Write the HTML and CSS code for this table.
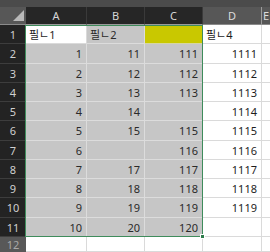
FILE: index.html
```html
<!DOCTYPE html>
<html lang="ko">
<head>
  <meta charset="UTF-8" />
  <title>Sheet</title>
  <link rel="stylesheet" href="styles.css">
</head>
<body>
  <div class="sheet">
    <div class="strip"></div>

    <!-- column headers -->
    <div class="corner"><span class="tri"></span></div>
    <div class="colhead sel">A</div>
    <div class="colhead sel">B</div>
    <div class="colhead sel">C</div>
    <div class="colhead">D</div>
    <div class="colhead">E</div>

    <!-- row 1 -->
    <div class="rowhead">1</div>
    <div class="cell active txt">필ㄴ1</div>
    <div class="cell in txt">필ㄴ2</div>
    <div class="cell in yellow"></div>
    <div class="cell txt">필ㄴ4</div>
    <div class="cell"></div>

    <div class="rowhead">2</div>
    <div class="cell in">1</div>
    <div class="cell in">11</div>
    <div class="cell in">111</div>
    <div class="cell">1111</div>
    <div class="cell"></div>

    <div class="rowhead">3</div>
    <div class="cell in">2</div>
    <div class="cell in">12</div>
    <div class="cell in">112</div>
    <div class="cell">1112</div>
    <div class="cell"></div>

    <div class="rowhead">4</div>
    <div class="cell in">3</div>
    <div class="cell in">13</div>
    <div class="cell in">113</div>
    <div class="cell">1113</div>
    <div class="cell"></div>

    <div class="rowhead">5</div>
    <div class="cell in">4</div>
    <div class="cell in">14</div>
    <div class="cell in"></div>
    <div class="cell">1114</div>
    <div class="cell"></div>

    <div class="rowhead">6</div>
    <div class="cell in">5</div>
    <div class="cell in">15</div>
    <div class="cell in">115</div>
    <div class="cell">1115</div>
    <div class="cell"></div>

    <div class="rowhead">7</div>
    <div class="cell in">6</div>
    <div class="cell in"></div>
    <div class="cell in">116</div>
    <div class="cell">1116</div>
    <div class="cell"></div>

    <div class="rowhead">8</div>
    <div class="cell in">7</div>
    <div class="cell in">17</div>
    <div class="cell in">117</div>
    <div class="cell">1117</div>
    <div class="cell"></div>

    <div class="rowhead">9</div>
    <div class="cell in">8</div>
    <div class="cell in">18</div>
    <div class="cell in">118</div>
    <div class="cell">1118</div>
    <div class="cell"></div>

    <div class="rowhead">10</div>
    <div class="cell in">9</div>
    <div class="cell in">19</div>
    <div class="cell in">119</div>
    <div class="cell">1119</div>
    <div class="cell"></div>

    <div class="rowhead">11</div>
    <div class="cell in">10</div>
    <div class="cell in">20</div>
    <div class="cell in">120</div>
    <div class="cell"></div>
    <div class="cell"></div>

    <div class="rowhead off">12</div>
    <div class="cell"></div>
    <div class="cell"></div>
    <div class="cell"></div>
    <div class="cell"></div>
    <div class="cell"></div>

    <!-- selection frame A1:C11 -->
    <div class="selection"><span class="handle"></span></div>
  </div>
</body>
</html>
```

FILE: styles.css
```css
* {
  box-sizing: border-box;
  margin: 0;
  padding: 0;
}
body {
  background: #ffffff;
  font-family: "Noto Sans", "Noto Sans CJK KR", sans-serif;
  font-size: 11px;
  color: #1e1e1e;
  overflow: hidden;
}
.sheet {
  display: grid;
  grid-template-columns: 26px 61px 58px 58px 59px 1fr;
  grid-template-rows: 7px 18px 19px 20px 19px 19px 19px 20px 19px 19px 19px 20px 19px 1fr;
  width: 270px;
  height: 252px;
  position: relative;
}
.strip {
  grid-column: 1 / -1;
  background: #4b4b4b;
}
/* Headers */
.corner {
  background: #575757;
  border-bottom: 1px solid #8a8a8a;
  position: relative;
}
.corner .tri {
  position: absolute;
  right: 2px;
  bottom: 3px;
  width: 11px;
  height: 11px;
  background: #b9b9b9;
  clip-path: polygon(100% 0, 100% 100%, 0 100%);
}
.colhead {
  background: #575757;
  color: #dcdcdc;
  display: flex;
  align-items: center;
  justify-content: center;
  border-right: 1px solid #9a9a9a;
  border-bottom: 1px solid #8a8a8a;
  line-height: 1;
}
.colhead.sel {
  background: #262626;
  color: #d6d6d6;
  border-right-color: #3a3a3a;
  border-bottom-color: #9a9a9a;
}
.rowhead {
  background: #232323;
  color: #d0d0d0;
  display: flex;
  align-items: center;
  justify-content: center;
  border-bottom: 1px solid #3d3d3d;
  line-height: 1;
}
.rowhead.off {
  background: #585858;
  color: #a8a8a8;
  border-bottom: none;
}
/* Cells */
.cell {
  background: #ffffff;
  border-right: 1px solid #dadada;
  border-bottom: 1px solid #dadada;
  display: flex;
  align-items: center;
  justify-content: flex-end;
  padding: 0 4px;
  line-height: 1;
  white-space: nowrap;
}
.cell.txt {
  justify-content: flex-start;
  padding: 0 3px;
}
.cell.in {
  background: #c6c6c6;
  border-color: #dcdcdc;
  color: #2a2a2a;
}
.cell.active {
  background: #ffffff;
}
.cell.yellow {
  background: #c9c800;
  border-color: #d6d6a0;
}
/* Selection frame, laid over the grid area A1:C11 */
.selection {
  position: absolute;
  grid-row: 3 / 14;
  grid-column: 2 / 5;
  top: 0;
  bottom: 0;
  left: -1px;
  right: 0;
  border: 1px solid #3f8c5c;
  pointer-events: none;
}
.handle {
  position: absolute;
  right: -3px;
  bottom: -3px;
  width: 5px;
  height: 5px;
  background: #2f7d4c;
  border: 1px solid #ffffff;
}
```
